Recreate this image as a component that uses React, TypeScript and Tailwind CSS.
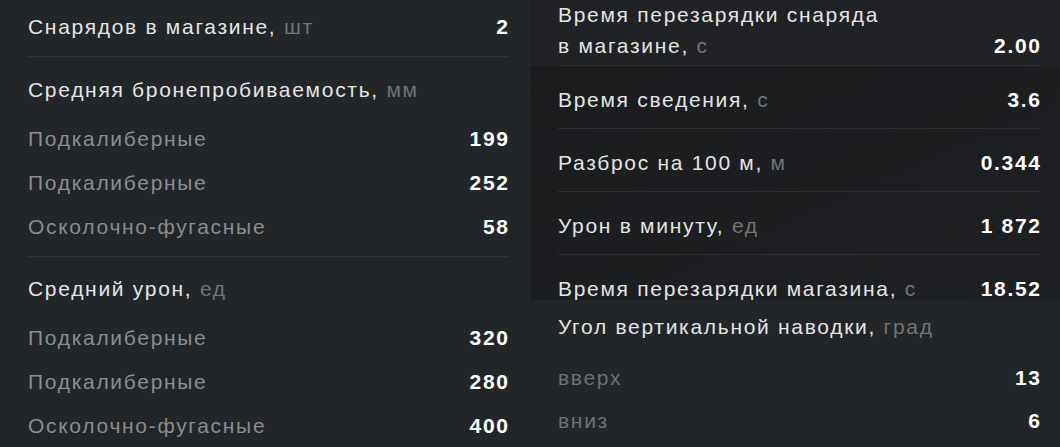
import React from "react";

type Row = { label: string; unit?: string; value: string };

const font = { fontFamily: '"Liberation Sans", Arial, sans-serif' };

const Label = ({ label, unit }: { label: string; unit?: string }) => (
    <span className="text-[#e4e4e4]">
        {unit ? `${label}, ` : label}
        {unit && <span className="text-[#727477]">{unit}</span>}
    </span>
);

const Value = ({ children }: { children: React.ReactNode }) => (
    <span className="-mr-[1.7px] font-bold text-white">{children}</span>
);

const SubRow = ({ label, value }: { label: string; value: string }) => (
    <div className="flex h-[44px] items-center justify-between">
        <span className="text-[#8b8d90]">{label}</span>
        <Value>{value}</Value>
    </div>
);

const PanelRow = ({ row, last }: { row: Row; last?: boolean }) => (
    <div className={last ? "flex h-[45px] justify-between pt-[22px]" : "flex h-[63px] justify-between border-b border-[#2d3033] pt-[22px]"}>
        <Label label={row.label} unit={row.unit} />
        <Value>{row.value}</Value>
    </div>
);

const penetration = [
    { label: "Подкалиберные", value: "199" },
    { label: "Подкалиберные", value: "252" },
    { label: "Осколочно-фугасные", value: "58" },
];

const damage = [
    { label: "Подкалиберные", value: "320" },
    { label: "Подкалиберные", value: "280" },
    { label: "Осколочно-фугасные", value: "400" },
];

const panelRows: Row[] = [
    { label: "Время сведения", unit: "с", value: "3.6" },
    { label: "Разброс на 100 м", unit: "м", value: "0.344" },
    { label: "Урон в минуту", unit: "ед", value: "1 872" },
    { label: "Время перезарядки магазина", unit: "с", value: "18.52" },
];

export default function App() {
    return (
        <div style={font} className="grid h-[447px] w-[1060px] grid-cols-2 overflow-hidden bg-[#232629] text-[21px] leading-[24px] tracking-[1.7px]">
            {/* Left column */}
            <div className="pl-[28px] pr-[22px]">
                <div className="flex h-[57px] items-center justify-between border-b border-[#33363a] pb-[3px]">
                    <Label label="Снарядов в магазине" unit="шт" />
                    <Value>2</Value>
                </div>

                <div className="h-[60px] pt-[21px]">
                    <Label label="Средняя бронепробиваемость" unit="мм" />
                </div>
                {penetration.map((r, i) => (
                    <SubRow key={i} label={r.label} value={r.value} />
                ))}

                <div className="mt-[7px] h-[60px] border-t border-[#33363a] pt-[20px]">
                    <Label label="Средний урон" unit="ед" />
                </div>
                {damage.map((r, i) => (
                    <SubRow key={i} label={r.label} value={r.value} />
                ))}
            </div>

            {/* Right column */}
            <div className="flex flex-col">
                <div className="bg-[#202225] pl-[28px] pr-[20px]">
                    <div className="flex h-[66px] items-end justify-between border-b border-[#2d3033] pb-[4px] leading-[31px]">
                        <span className="text-[#e4e4e4]">
                            Время перезарядки снаряда
                            <br />
                            в магазине, <span className="text-[#727477]">с</span>
                        </span>
                        <Value>2.00</Value>
                    </div>
                </div>

                <div className="bg-gradient-to-br from-[#1a1c1e] to-[#1e2023] pl-[28px] pr-[20px]">
                    {panelRows.map((r, i) => (
                        <PanelRow key={i} row={r} last={i === panelRows.length - 1} />
                    ))}
                </div>

                <div className="pl-[28px] pr-[20px]">
                    <div className="h-[56px] pt-[15px]">
                        <Label label="Угол вертикальной наводки" unit="град" />
                    </div>
                    <div className="flex h-[43px] items-center justify-between">
                        <span className="text-[#6e7073]">вверх</span>
                        <Value>13</Value>
                    </div>
                    <div className="flex h-[43px] items-center justify-between">
                        <span className="text-[#6e7073]">вниз</span>
                        <Value>6</Value>
                    </div>
                </div>
            </div>
        </div>
    );
}
